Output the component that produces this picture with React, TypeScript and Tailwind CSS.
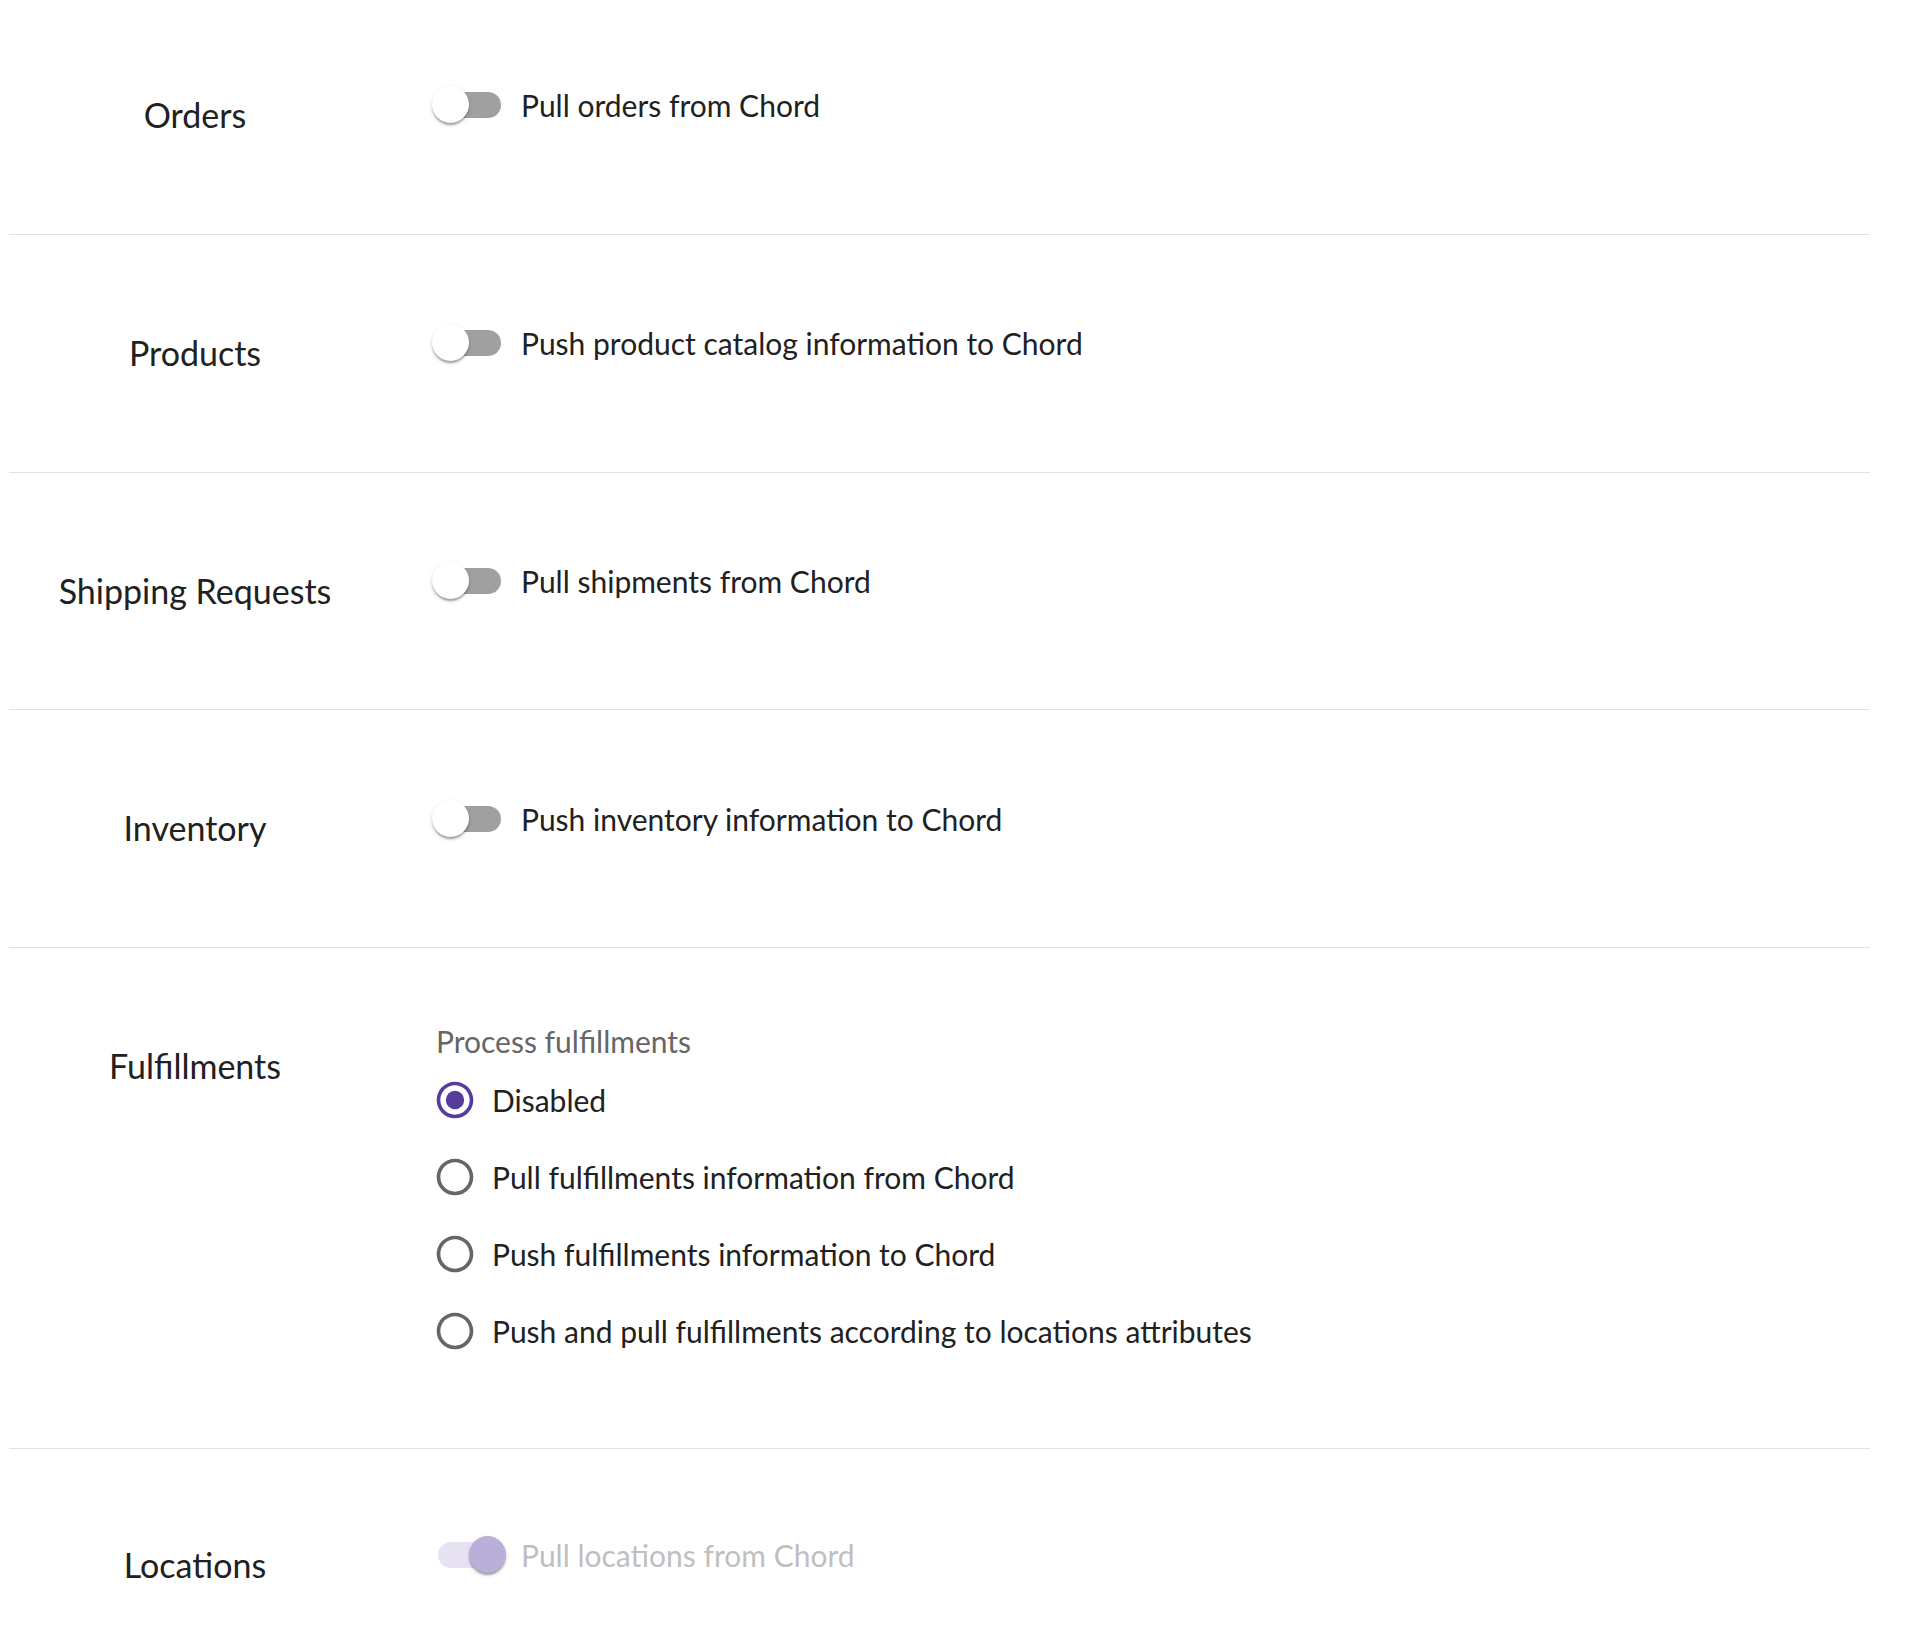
import React from "react";

const FONT = { fontFamily: "Lato, 'Noto Sans', sans-serif" };

function Switch({ checked = false }: { checked?: boolean }) {
  return (
    <div className="relative w-[107px] h-[70px] shrink-0">
      <div
        className={
          "absolute left-[22px] top-[22px] w-[63px] h-[26px] rounded-full " +
          (checked ? "bg-[#e7e3f3]" : "bg-[#a0a0a0]")
        }
      />
      <div
        className={
          "absolute top-[16px] w-[37px] h-[37px] rounded-full shadow-[0_3px_2px_-1px_rgba(0,0,0,0.2),0_2px_2px_0_rgba(0,0,0,0.14),0_2px_5px_0_rgba(0,0,0,0.12)] " +
          (checked ? "left-[53px] bg-[#b9afd9]" : "left-[16px] bg-white")
        }
      />
    </div>
  );
}

function SwitchLine({ text, checked, disabled }: { text: string; checked?: boolean; disabled?: boolean }) {
  return (
    <div className="flex items-center ml-[-20px]">
      <Switch checked={checked} />
      <span className={"text-[30px] leading-[44px] ml-[-2px] " + (disabled ? "text-[#bfbfbf]" : "text-[#212121]")}>{text}</span>
    </div>
  );
}

function Radio({ checked, label }: { checked?: boolean; label: string }) {
  return (
    <div className="flex items-center ml-[-20px] h-[77px]">
      <div className="w-[77px] h-[77px] flex items-center justify-center shrink-0">
        <svg width="44" height="44" viewBox="0 0 24 24">
          <path
            fill={checked ? "#563d9c" : "#666666"}
            d="M12 2C6.48 2 2 6.48 2 12s4.48 10 10 10 10-4.48 10-10S17.52 2 12 2zm0 18c-4.42 0-8-3.58-8-8s3.58-8 8-8 8 3.58 8 8-3.58 8-8 8z"
          />
          {checked && <circle cx="12" cy="12" r="5" fill="#563d9c" />}
        </svg>
      </div>
      <span className="text-[30px] leading-[44px] ml-[-1px] text-[#212121]">{label}</span>
    </div>
  );
}

function Row({
  label,
  h,
  labelTop,
  contentTop,
  border = true,
  children,
}: {
  label: string;
  h: string;
  labelTop: string;
  contentTop: string;
  border?: boolean;
  children: React.ReactNode;
}) {
  return (
    <div className={"flex items-start " + h + (border ? " border-b border-[#e0e0e0]" : "")}>
      <div className={"w-[372px] shrink-0 text-center text-[34px] leading-[48px] text-[#212121] " + labelTop}>{label}</div>
      <div className={"pl-[55px] " + contentTop}>{children}</div>
    </div>
  );
}

export default function App() {
  return (
    <div className="bg-white min-h-[1648px]" style={FONT}>
      <div className="ml-[9px] w-[1861px]">
        <Row label="Orders" h="h-[235px]" labelTop="pt-[91px]" contentTop="pt-[70px]">
          <SwitchLine text="Pull orders from Chord" />
        </Row>
        <Row label="Products" h="h-[238px]" labelTop="pt-[94px]" contentTop="pt-[73px]">
          <SwitchLine text="Push product catalog information to Chord" />
        </Row>
        <Row label="Shipping Requests" h="h-[237px]" labelTop="pt-[94px]" contentTop="pt-[73px]">
          <SwitchLine text="Pull shipments from Chord" />
        </Row>
        <Row label="Inventory" h="h-[238px]" labelTop="pt-[94px]" contentTop="pt-[74px]">
          <SwitchLine text="Push inventory information to Chord" />
        </Row>
        <Row label="Fulfillments" h="h-[501px]" labelTop="pt-[94px]" contentTop="pt-[73px]">
          <div className="flex flex-col">
            <div className="text-[30px] leading-[41px] text-[#666666]">Process fulfillments</div>
            <div className="flex flex-col mt-[-1px]">
              <Radio checked label="Disabled" />
              <Radio label="Pull fulfillments information from Chord" />
              <Radio label="Push fulfillments information to Chord" />
              <Radio label="Push and pull fulfillments according to locations attributes" />
            </div>
          </div>
        </Row>
        <Row label="Locations" h="h-[199px]" labelTop="pt-[92px]" contentTop="pt-[71px]" border={false}>
          <SwitchLine text="Pull locations from Chord" checked disabled />
        </Row>
      </div>
    </div>
  );
}
